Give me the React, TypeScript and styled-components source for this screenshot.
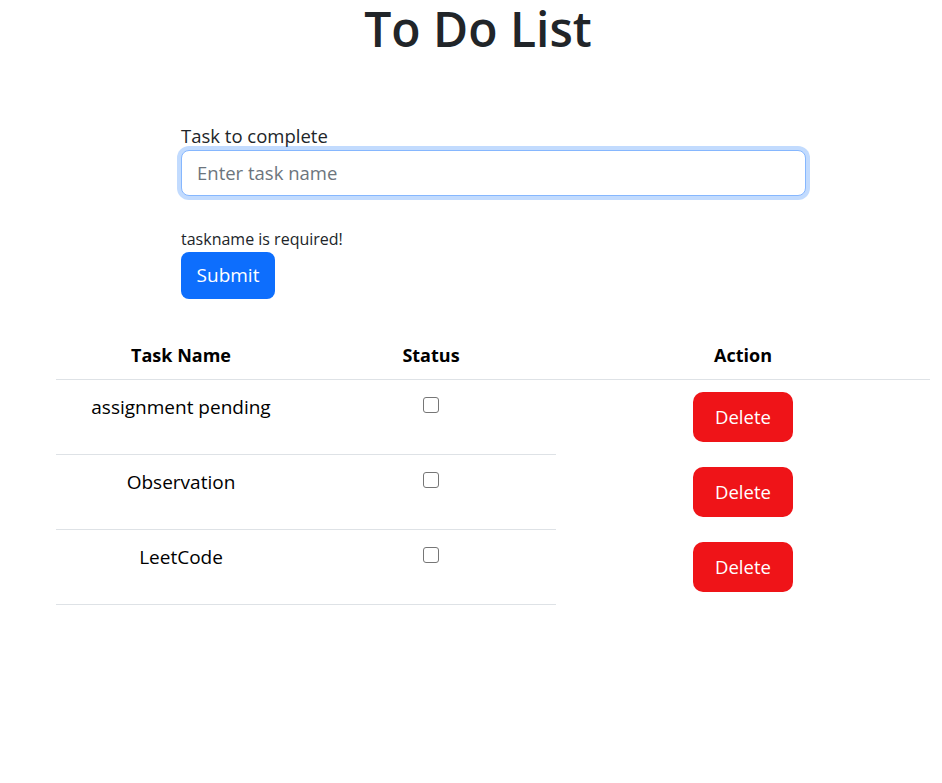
import React, { useState } from "react";
import styled, { createGlobalStyle } from "styled-components";

const GlobalStyle = createGlobalStyle`
  * {
    box-sizing: border-box;
  }
  body {
    margin: 0;
    background: #fff;
    font-family: "Open Sans", "Noto Sans", "Liberation Sans", sans-serif;
    color: #212529;
  }
`;

const Page = styled.div`
  width: 942px;
  min-height: 783px;
`;

const Title = styled.h1`
  margin: 0;
  padding-left: 14px;
  text-align: center;
  font-size: 48px;
  line-height: 1.2;
  font-weight: 600;
  color: #212529;
`;

const Form = styled.form`
  margin: 66px 0 0 181px;
  width: 625px;
  display: flex;
  flex-direction: column;
  align-items: flex-start;
`;

const Label = styled.label`
  font-size: 18.5px;
  line-height: 24px;
  padding-bottom: 2px;
`;

const Input = styled.input`
  width: 100%;
  height: 46px;
  padding: 0 15px;
  font-family: inherit;
  font-size: 18.5px;
  color: #212529;
  border: 1px solid #86b7fe;
  border-radius: 8px;
  outline: none;
  box-shadow: 0 0 0 4px rgba(13, 110, 253, 0.25);

  &::placeholder {
    color: #6c757d;
  }
`;

const ErrorText = styled.div`
  margin-top: 31px;
  font-size: 16px;
  line-height: 25px;
`;

const Button = styled.button<{ $variant: "primary" | "danger" }>`
  font-family: inherit;
  font-size: ${(p) => (p.$variant === "primary" ? "19px" : "18.5px")};
  line-height: 1.5;
  color: #fff;
  border: none;
  cursor: pointer;
  background: ${(p) => (p.$variant === "primary" ? "#0d6efd" : "#ef1418")};
  border-radius: ${(p) => (p.$variant === "primary" ? "8px" : "10px")};
  width: ${(p) => (p.$variant === "primary" ? "94px" : "100px")};
  height: ${(p) => (p.$variant === "primary" ? "47px" : "50px")};
  padding: 0;
`;

const Table = styled.table`
  margin: 29px 0 0 56px;
  width: 874px;
  border-collapse: collapse;
  color: #000;
  font-size: 19px;
  line-height: 27px;
`;

const Th = styled.th<{ $w: number }>`
  width: ${(p) => p.$w}px;
  padding: 14px 0 10px;
  font-size: 18px;
  font-weight: 700;
  text-align: center;
  border-bottom: 1px solid #dee2e6;
`;

const Td = styled.td<{ $border?: boolean }>`
  padding: 12px 0 13px;
  text-align: center;
  vertical-align: top;
  border-bottom: ${(p) => (p.$border ? "1px solid #dee2e6" : "none")};
`;

const TaskText = styled.span`
  display: inline-block;
  padding-top: 2px;
`;

const Check = styled.input`
  appearance: none;
  width: 16px;
  height: 16px;
  margin: 5px 0 0;
  border: 1px solid #767676;
  border-radius: 3px;
  background: #fff;
  vertical-align: top;

  &:checked {
    background: #0d6efd;
    border-color: #0d6efd;
  }
`;

const initialTasks = [
  { id: 1, name: "assignment pending", done: false },
  { id: 2, name: "Observation", done: false },
  { id: 3, name: "LeetCode", done: false },
];

export default function App() {
  const [tasks, setTasks] = useState(initialTasks);

  const toggle = (id: number) =>
    setTasks((prev) =>
      prev.map((t) => (t.id === id ? { ...t, done: !t.done } : t))
    );

  const remove = (id: number) =>
    setTasks((prev) => prev.filter((t) => t.id !== id));

  return (
    <Page>
      <GlobalStyle />
      <Title>To Do List</Title>
      <Form onSubmit={(e) => e.preventDefault()}>
        <Label htmlFor="task">Task to complete</Label>
        <Input id="task" placeholder="Enter task name" />
        <ErrorText>taskname is required!</ErrorText>
        <Button $variant="primary" type="submit">
          Submit
        </Button>
      </Form>
      <Table>
        <thead>
          <tr>
            <Th $w={250}>Task Name</Th>
            <Th $w={250}>Status</Th>
            <Th $w={374}>Action</Th>
          </tr>
        </thead>
        <tbody>
          {tasks.map((t) => (
            <tr key={t.id}>
              <Td $border>
                <TaskText>{t.name}</TaskText>
              </Td>
              <Td $border>
                <Check
                  type="checkbox"
                  checked={t.done}
                  onChange={() => toggle(t.id)}
                />
              </Td>
              <Td>
                <Button $variant="danger" onClick={() => remove(t.id)}>
                  Delete
                </Button>
              </Td>
            </tr>
          ))}
        </tbody>
      </Table>
    </Page>
  );
}
